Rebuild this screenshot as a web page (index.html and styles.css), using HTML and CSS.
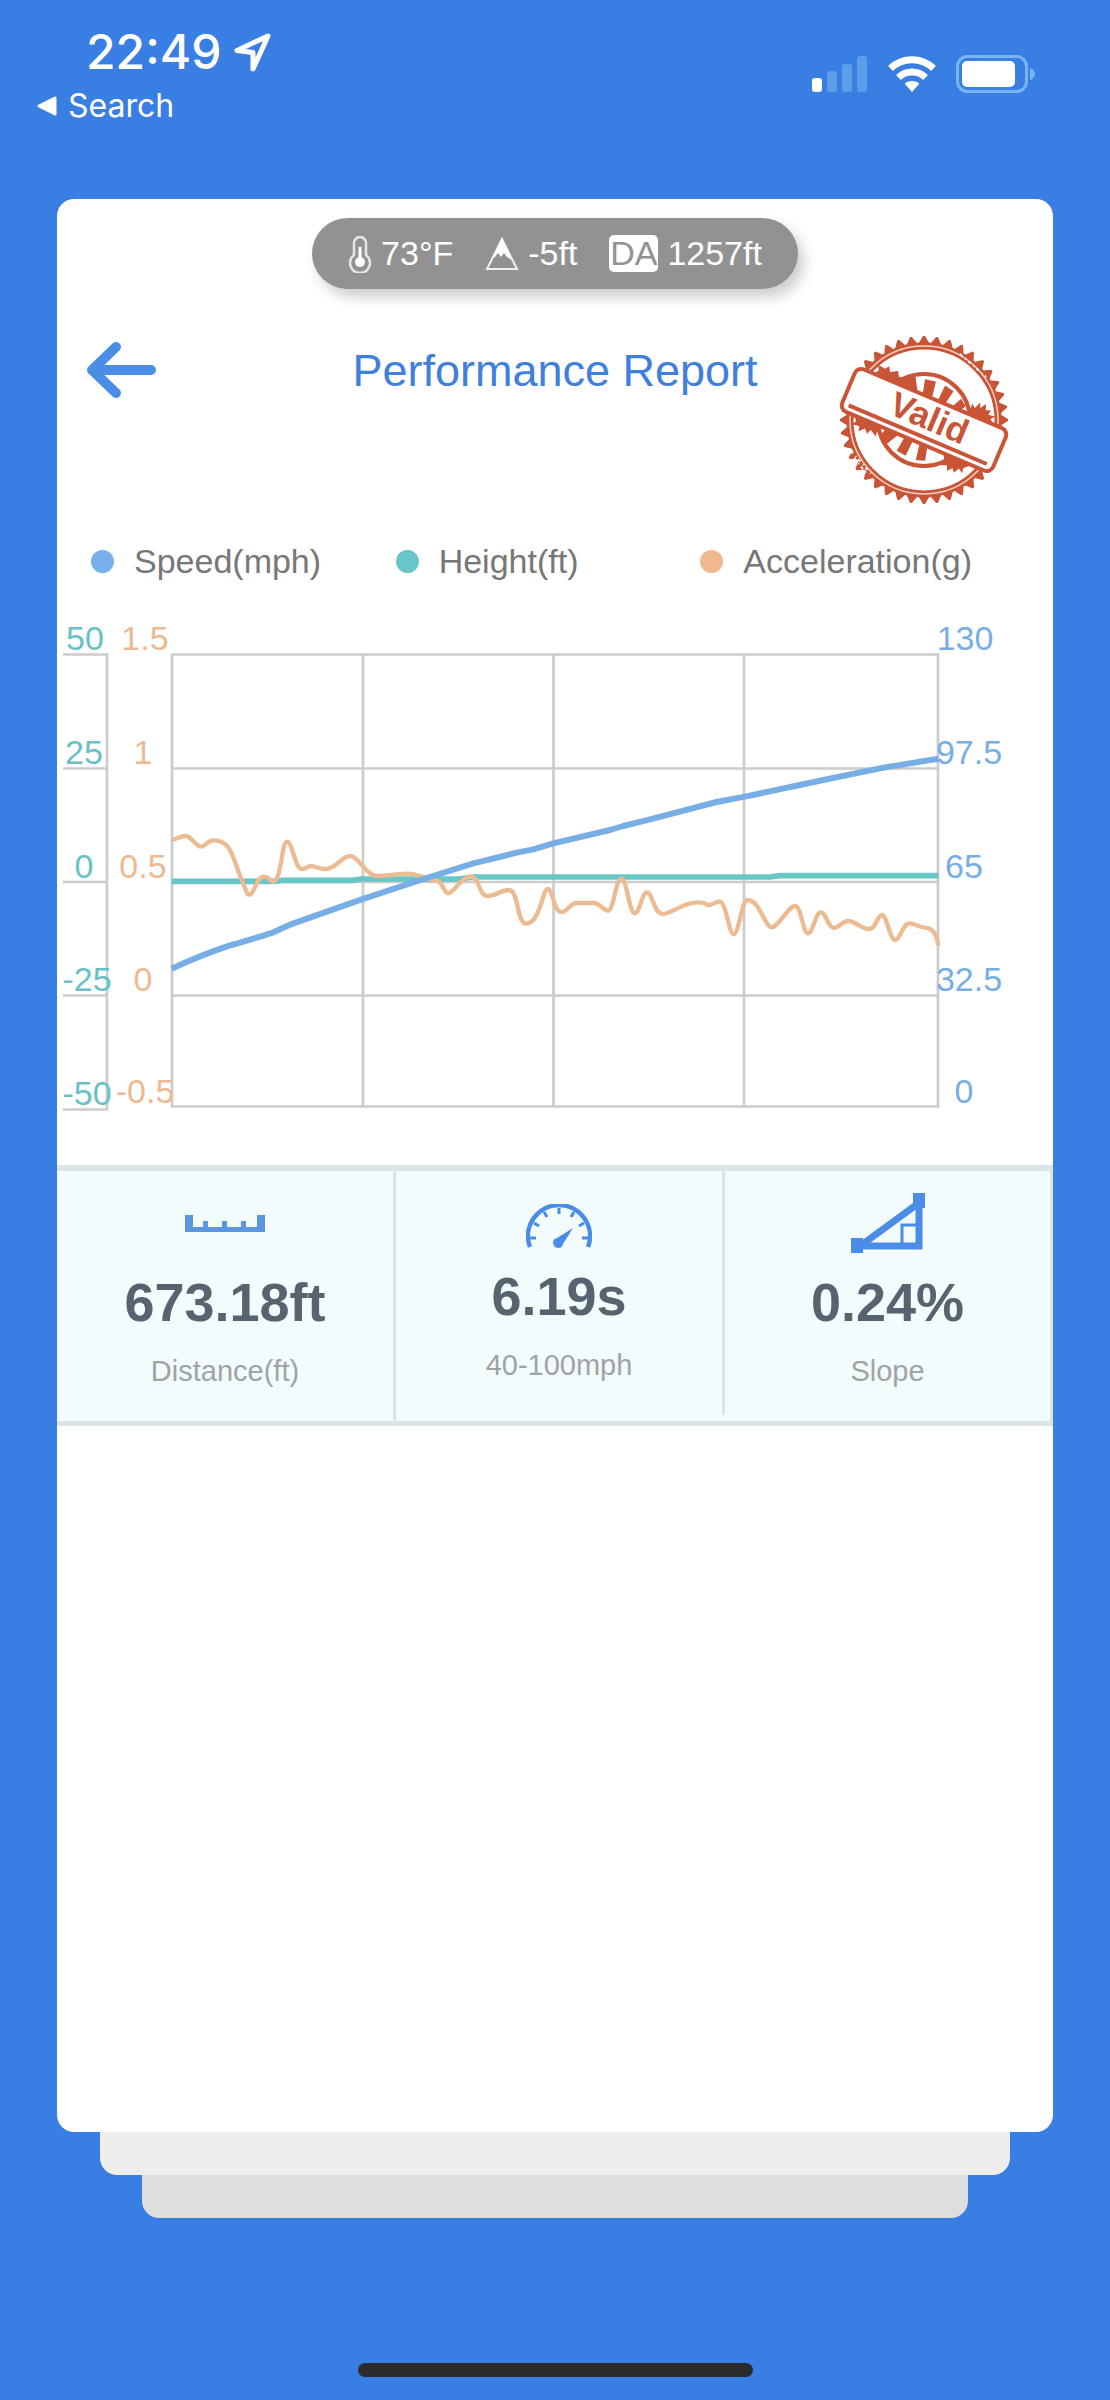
FILE: index.html
```
<!DOCTYPE html>
<html lang="en">
<head>
<meta charset="utf-8">
<meta name="viewport" content="width=device-width, initial-scale=1">
<title>Performance Report</title>
<link rel="stylesheet" href="styles.css">
</head>
<body>
<header class="status">
  <div class="status-left">
    <div class="clock">
      <span class="time">22:49</span>
      <svg width="40" height="40" viewBox="0 0 40 40" aria-hidden="true"><path d="M35 4 4 18.500 20 20.500 20 37Z" fill="none" stroke="#fff" stroke-width="5" stroke-linejoin="round"/></svg>
    </div>
    <a class="return" href="#search">
      <svg width="22" height="20" viewBox="0 0 22 20" aria-hidden="true"><path d="M19 2v16L3 10Z" fill="#fff" stroke="#fff" stroke-width="3" stroke-linejoin="round"/></svg>
      Search
    </a>
  </div>
  <div class="status-right">
    <svg width="56" height="36" viewBox="0 0 56 36" aria-hidden="true">
      <rect x="0" y="22" width="10" height="14" rx="3" fill="#fff"/>
      <g fill="#5c9ee9"><rect x="15" y="15" width="10" height="21" rx="3"/><rect x="30" y="8" width="10" height="28" rx="3"/><rect x="45" y="0" width="10" height="36" rx="3"/></g>
    </svg>
    <svg width="48" height="36" viewBox="0 0 48 36" aria-hidden="true">
      <g fill="none" stroke="#fff" stroke-width="7"><path d="M2.500 12.500A31 31 0 0 1 45.500 12.500"/><path d="M10.500 21.500A19.500 19.500 0 0 1 37.500 21.500"/></g>
      <path d="M24 36 17 28Q17 25.500 24 25Q31 25.500 31 28Z" fill="#fff"/>
    </svg>
    <svg width="80" height="38" viewBox="0 0 80 38" aria-hidden="true">
      <rect x="1.500" y="1.500" width="69" height="35" rx="10" fill="none" stroke="#78b4f2" stroke-width="3"/>
      <rect x="6" y="6" width="53" height="26" rx="5" fill="#fff"/>
      <path d="M74 13q5 2 5 6t-5 6Z" fill="#78b4f2"/>
    </svg>
  </div>
</header>

<main class="stack">
  <section class="card">
    <div class="weather">
      <span class="reading">
        <svg width="24" height="38" viewBox="0 0 24 38" aria-hidden="true"><path d="M6 20V8a6 6 0 0 1 12 0v12a10 10 0 1 1-12 0Z" fill="none" stroke="#e6e6e6" stroke-width="2.500"/><path d="M12 12v15" stroke="#fff" stroke-width="3"/><circle cx="12" cy="27" r="5" fill="#fff"/></svg>
        73°F
      </span>
      <span class="reading">
        <svg width="34" height="34" viewBox="0 0 34 34" aria-hidden="true"><path d="M17 2 2 32h30Z" fill="none" stroke="#eee" stroke-width="2"/><path d="M17 1 7 21l3-1 3-4 3 4 3-4 3 4 5 3Z" fill="#fff"/></svg>
        -5ft
      </span>
      <span class="reading"><span class="badge">DA</span> 1257ft</span>
    </div>

    <div class="heading">
      <button class="back" type="button" aria-label="Back">
        <svg width="70" height="58" viewBox="0 0 70 58" aria-hidden="true"><path d="M65 29H7M30 6 6 29 30 52" fill="none" stroke="#4a8de6" stroke-width="10" stroke-linecap="round" stroke-linejoin="round"/></svg>
      </button>
      <h1>Performance Report</h1>
      <svg class="stamp" width="176" height="176" viewBox="-88 -88 176 176" role="img" aria-label="Valid">
        <defs>
          <path id="tooth" d="M-7-74-1-84H1L7-74Z"/>
          <g id="teeth"><use href="#tooth"/><use href="#tooth" transform="rotate(9)"/><use href="#tooth" transform="rotate(18)"/><use href="#tooth" transform="rotate(27)"/><use href="#tooth" transform="rotate(36)"/></g>
          <g id="quarter"><use href="#teeth"/><use href="#teeth" transform="rotate(45)"/></g>
        </defs>
        <g fill="#c95436"><use href="#quarter"/><use href="#quarter" transform="rotate(90)"/><use href="#quarter" transform="rotate(180)"/><use href="#quarter" transform="rotate(270)"/></g>
        <circle r="74" fill="#fff" stroke="#c95436" stroke-width="7"/>
        <circle r="74" fill="none" stroke="#f3d3c5" stroke-width="1.500"/>
        <circle r="46" fill="none" stroke="#c95436" stroke-width="4"/>
        <g transform="rotate(23)" fill="#c95436">
          <path d="M-31-22-35-30-25-37-16-22ZM-11-22-15-38-4-40-1-22ZM5-22 6-40 16-38 13-22ZM20-22 26-34 33-29 29-22Z"/>
          <path d="M-31 22-34 30-25 37-17 22ZM-11 22-13 39-3 40-2 22ZM5 22 8 40 17 37 13 22Z"/>
          <path d="M-65-22-61-28-64-33-56-32-53-36-50-31-43-35-40-30-34-31-30-22ZM39-22 38-34 42-31 45-38 47-33 51-39 53-33 58-35 57-30 64-31 61-27 66-22Z"/>
          <path d="M-66 22-62 28-65 32-57 31-56 36-51 31-47 35-45 30-38 34-39 27-30 22ZM30 22 35 30 33 35 39 33 41 38 45 33 48 37 51 31 56 34 55 29 62 22Z"/>
        </g>
        <g transform="rotate(23)">
          <rect x="-82" y="-23" width="164" height="46" rx="7" fill="#fff" stroke="#c95436" stroke-width="4"/>
          <path d="M-75 16H75" stroke="#c95436" stroke-width="4"/>
          <text x="4" y="8" class="stamp-text">Valid</text>
        </g>
        <path d="M36-66 62-43M-73 31-52 55M-70 38-57 54" stroke="#fff" stroke-width="2" stroke-dasharray="3 4 1 3"/>
      </svg>
    </div>

    <ul class="legend">
      <li><span class="dot dot-speed"></span>Speed(mph)</li>
      <li><span class="dot dot-height"></span>Height(ft)</li>
      <li><span class="dot dot-accel"></span>Acceleration(g)</li>
    </ul>

    <svg class="chart" viewBox="57 620 996 500" role="img" aria-label="Speed, height and acceleration over the run">
      <g fill="none" stroke="#ccc" stroke-width="2.700">
        <path d="M63 654.500H107V1109.500H63M63 768.500H107M63 882H107M63 995.500H107"/>
        <path d="M172 654.500H938V1106.500H172ZM172 768.500H938M172 882H938M172 995.500H938M363 654V1106M553.500 654V1106M744 654V1106"/>
      </g>
      <g transform="translate(50 800) scale(.33333)" fill="none" stroke-linejoin="round">
        <path stroke="#69c6c6" stroke-width="17" d="M365 244H670L700 241H905L935 237H1230L1270 231H2160L2190 227H2665"/>
        <path stroke="#edbb92" stroke-width="13" d="M365 119C380 118 390 108 407 108S438 140 453 140S470 120 493 121C545 121 550 180 572 232S590 284 600 284S622 230 640 230S660 245 670 245C695 240 695 125 711 125S735 207 755 207S770 198 782 198S810 207 823 207C860 207 875 168 900 168S950 228 980 228S1050 221 1075 221S1130 238 1155 240S1180 280 1195 280S1235 230 1262 230S1285 288 1313 288S1350 270 1378 270S1400 371 1428 371C1470 371 1478 267 1493 267S1512 336 1533 336S1560 309 1580 309S1610 309 1630 309S1660 332 1675 332S1698 236 1714 236S1738 340 1754 340S1775 277 1791 277S1812 342 1838 342S1900 307 1940 307S1960 315 1975 315S1994 305 2008 305C2030 305 2036 403 2051 403S2076 300 2092 300C2130 300 2145 382 2165 382S2215 318 2235 318S2258 400 2274 400S2296 337 2312 337S2335 384 2352 384S2375 363 2395 363S2435 387 2457 387S2482 345 2496 345S2520 420 2535 420S2560 370 2577 370S2605 382 2625 383S2660 400 2665 437"/>
        <path stroke="#77aee6" stroke-width="18" d="M365 506Q450 466 540 436Q600 420 670 397L720 374 935 298 1130 234 1270 190 1400 158 1450 148 1510 130 1680 90 1720 78 1800 58 2000 6 2085-10 2235-42 2320-60 2490-95 2665-124"/>
      </g>
      <g class="axis axis-height"><text x="85" y="650">50</text><text x="84" y="764">25</text><text x="84" y="878">0</text><text x="87" y="991">-25</text><text x="87" y="1105">-50</text></g>
      <g class="axis axis-accel"><text x="145" y="650">1.5</text><text x="143" y="764">1</text><text x="143" y="878">0.5</text><text x="143" y="991">0</text><text x="145" y="1103">-0.5</text></g>
      <g class="axis axis-speed"><text x="965" y="650">130</text><text x="969" y="764">97.5</text><text x="964" y="878">65</text><text x="969" y="991">32.5</text><text x="964" y="1103">0</text></g>
    </svg>

    <div class="stats">
      <div class="stat">
        <div class="icon"><svg width="80" height="17" viewBox="0 0 80 17" aria-hidden="true"><path d="M0 0h8v12h10V6h5v6h14V6h5v6h14V6h5v6h11V0h8v17H0Z" fill="#5b96e0"/></svg></div>
        <strong>673.18ft</strong>
        <span>Distance(ft)</span>
      </div>
      <div class="stat stat-mid">
        <div class="icon"><svg width="66" height="44" viewBox="0 0 66 44" aria-hidden="true"><g fill="none" stroke="#4a8de6"><path d="M4 43A31 31 0 1 1 62 43" stroke-width="4.500"/><path d="M4 34H10M33 4V10M56 34H62M8 19l5 3M18 8l3 5M48 8l-3 5M58 19l-5 3" stroke-width="3"/></g><path d="M47 24 31 34a5 5 0 1 0 6 6Z" fill="#4a8de6"/></svg></div>
        <strong>6.19s</strong>
        <span>40-100mph</span>
      </div>
      <div class="stat">
        <div class="icon"><svg width="74" height="60" viewBox="0 0 74 60" aria-hidden="true"><path d="M9 53 68 10V53Z" fill="none" stroke="#4a8de6" stroke-width="7"/><path d="M51 50V32H68" fill="none" stroke="#4a8de6" stroke-width="3"/><path d="M0 45H12V60H0ZM62 0H74V15H62Z" fill="#4a8de6"/></svg></div>
        <strong>0.24%</strong>
        <span>Slope</span>
      </div>
    </div>
  </section>
  <div class="sheet sheet-one"></div>
  <div class="sheet sheet-two"></div>
</main>
<footer class="home"><span></span></footer>
</body>
</html>
```
FILE: styles.css
```
* { box-sizing: border-box; }

body {
  margin: 0;
  min-height: 100vh;
  display: flex;
  flex-direction: column;
  background: #397ee3;
  font-family: "Liberation Sans", Arial, sans-serif;
}

.status {
  display: flex;
  justify-content: space-between;
  padding: 22px 74px 0 36px;
  height: 199px;
  color: #fff;
  font-family: Inter, sans-serif;
}

.clock {
  display: flex;
  align-items: center;
  gap: 12px;
  padding-left: 50px;
  line-height: 60px;
}

.time { font-size: 48px; font-weight: 500; }

.return {
  display: flex;
  align-items: center;
  gap: 10px;
  color: #fff;
  font-size: 32px;
  line-height: 48px;
  text-decoration: none;
}

.status-right {
  display: flex;
  align-items: center;
  gap: 20px;
  height: 104px;
}

.stack { flex: 1; display: flex; flex-direction: column; }

.card {
  flex: 1;
  margin: 0 57px;
  padding-top: 19px;
  background: #fff;
  border-radius: 17px;
}

.sheet { height: 43px; border-radius: 0 0 17px 17px; }
.sheet-one { margin: 0 100px; background: #eee; }
.sheet-two { margin: 0 142px; background: #dedede; }

.weather {
  display: flex;
  align-items: center;
  justify-content: center;
  gap: 32px;
  width: 486px;
  height: 71px;
  margin: 0 auto;
  border-radius: 36px;
  background: #929292;
  box-shadow: 6px 8px 14px rgba(0, 0, 0, .2);
  color: #fff;
  font-size: 34px;
}

.reading { display: flex; align-items: center; gap: 9px; }

.badge {
  width: 49px;
  border-radius: 5px;
  background: #fff;
  color: #929292;
  line-height: 37px;
  text-align: center;
}

.heading {
  display: grid;
  grid-template-columns: 188px 1fr 176px;
  padding: 43px 41px 0 29px;
}

.back {
  align-self: start;
  justify-self: start;
  margin-top: 9px;
  padding: 0;
  border: 0;
  background: none;
  line-height: 0;
}

h1 {
  margin: 12px 0 0;
  color: #3e80dc;
  font-size: 45px;
  font-weight: 400;
  line-height: 54px;
  text-align: center;
}

.stamp-text {
  fill: #c95436;
  font-size: 35px;
  font-weight: 700;
  text-anchor: middle;
}

.legend {
  display: grid;
  grid-template-columns: repeat(3, 1fr);
  margin: 31px 48px 0 34px;
  padding: 0;
  list-style: none;
  color: #777;
  font-size: 34px;
  line-height: 44px;
}

.legend li { display: flex; align-items: center; gap: 20px; white-space: nowrap; }

.dot { width: 23px; height: 23px; border-radius: 50%; }
.dot-speed { background: #77b0ea; }
.dot-height { background: #69c6c8; }
.dot-accel { background: #f0b98e; }

.chart { display: block; width: 100%; margin-top: 37px; }

.axis { font-size: 34px; text-anchor: middle; }
.axis-height { fill: #69c1c6; }
.axis-accel { fill: #edb98f; }
.axis-speed { fill: #77aee6; }

.stats {
  display: grid;
  grid-template-columns: 339fr 329fr 328fr;
  align-items: start;
  margin-top: 45px;
  border-top: 6px solid #dbe5e5;
  border-bottom: 5px solid #dbe5e5;
  background: #f2fcfd;
}

.stat {
  display: flex;
  flex-direction: column;
  align-items: center;
  padding: 17px 0 27px;
  border-right: 3px solid #dbe5e5;
}

.icon { display: flex; align-items: center; height: 70px; }

.stat strong {
  margin-top: 9px;
  color: #586370;
  font-size: 54px;
  line-height: 70px;
}

.stat span {
  margin-top: 11px;
  color: #a0a3a5;
  font-size: 29px;
  line-height: 46px;
}

.stat-mid { padding-top: 21px; }
.stat-mid .icon { height: 60px; align-items: flex-end; padding-bottom: 4px; }

.home { display: flex; justify-content: center; padding: 145px 0 23px; }
.home span { width: 395px; height: 14px; border-radius: 7px; background: #2b2b2b; }
```
